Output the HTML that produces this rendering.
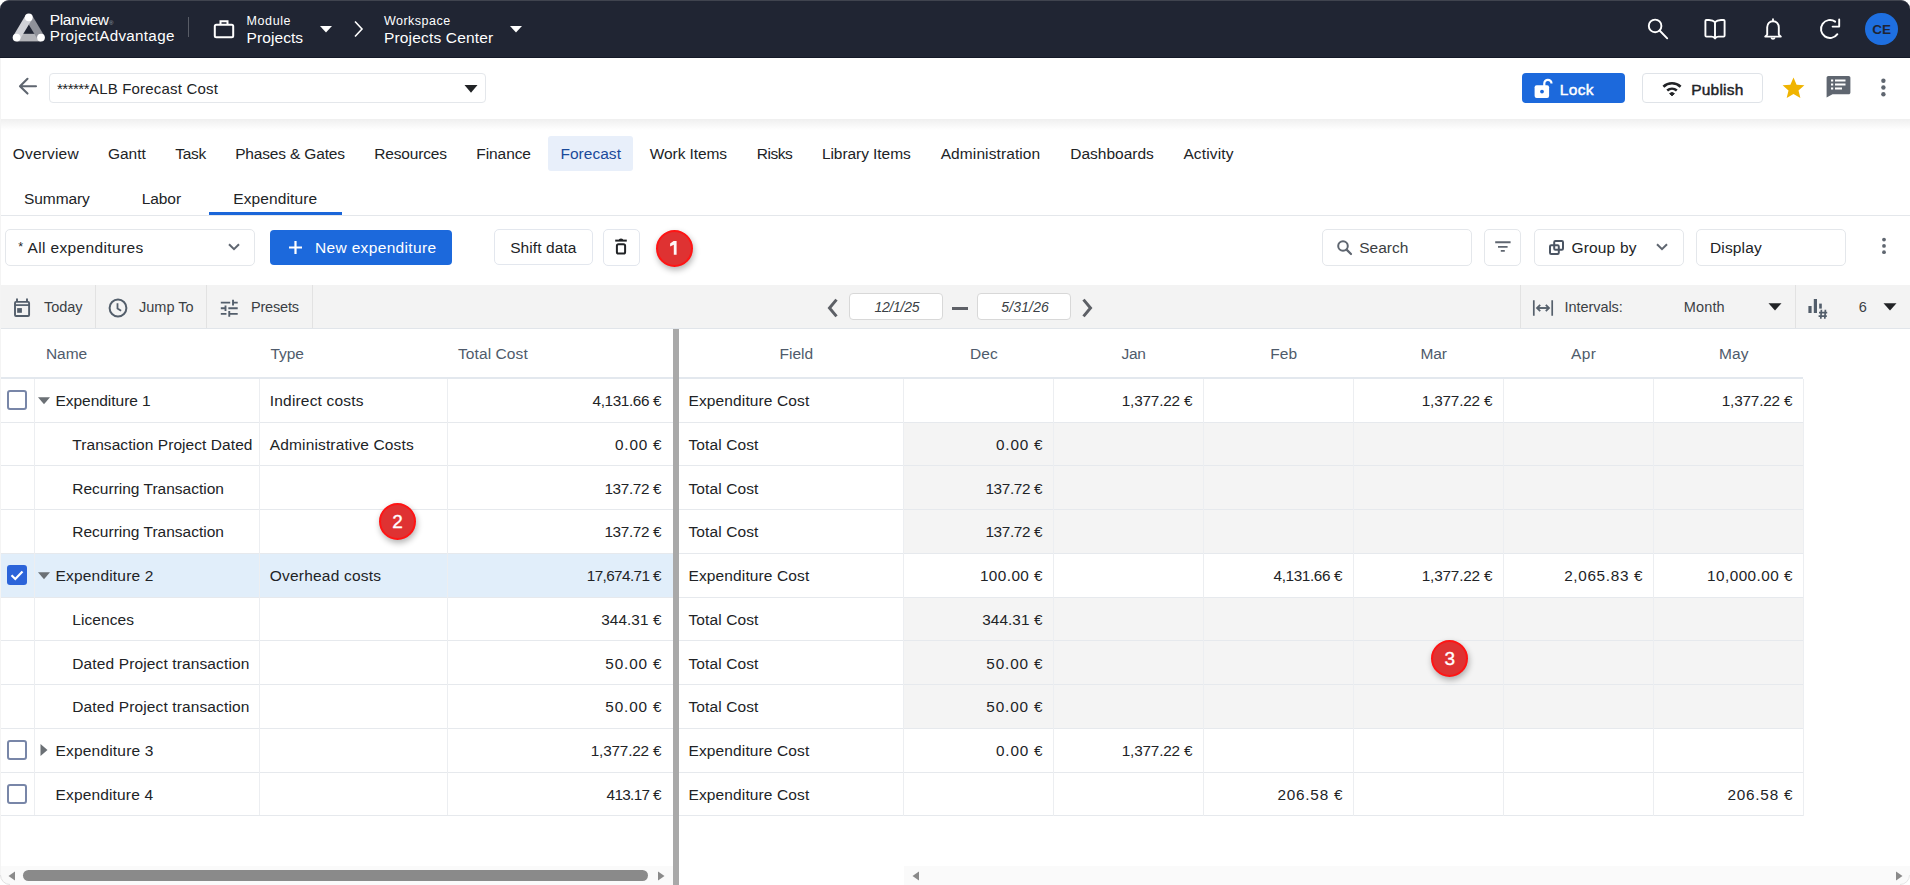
<!DOCTYPE html>
<html><head><meta charset="utf-8"><title>Forecast Expenditure</title>
<style>
*{box-sizing:border-box;margin:0;padding:0}
html,body{width:1910px;height:885px;overflow:hidden;background:#fff;font-family:"Liberation Sans",sans-serif;color:#212326}
svg{display:block}
</style></head><body>
<div style="position:absolute;left:0px;top:0px;width:1910px;height:58px;background:#202533;border-radius:9px 9px 0 0;border-top:1px solid #40444f;border-bottom:1px solid #141927;"></div>
<div style="position:absolute;left:0px;top:58px;width:1px;height:827px;background:#f4f4f4;"></div>
<svg style="position:absolute;left:8px;top:8px;overflow:visible;" width="44" height="40" viewBox="0 0 44 40">
<line x1="8.6" y1="29.6" x2="33" y2="29.6" stroke="#b3b4b9" stroke-width="7.6"/>
<line x1="20.8" y1="9.3" x2="33" y2="29.6" stroke="#8f9199" stroke-width="7.6"/>
<line x1="8.6" y1="29.6" x2="20.8" y2="9.3" stroke="#d1d2d7" stroke-width="7.6"/>
<circle cx="20.8" cy="9.3" r="3.9" fill="#fff"/>
<circle cx="8.6" cy="29.6" r="3.9" fill="#fff"/>
<circle cx="33" cy="29.6" r="3.9" fill="#fff"/>
</svg>
<span style="position:absolute;top:11.98px;font-size:15.5px;line-height:15.5px;white-space:pre;color:#fff;letter-spacing:-0.379px;left:49.7px;">Planview</span>
<span style="position:absolute;left:109px;top:20px;font-size:6px;line-height:6px;color:#9aa0aa">&#174;</span>
<span style="position:absolute;top:27.93px;font-size:15.2px;line-height:15.2px;white-space:pre;color:#fff;letter-spacing:0.318px;left:49.7px;">ProjectAdvantage</span>
<div style="position:absolute;left:188px;top:17px;width:1px;height:20px;background:#585c66;"></div>
<svg style="position:absolute;left:213px;top:19px;overflow:visible;" width="22" height="20" viewBox="0 0 22 20">
<rect x="1.8" y="5.8" width="18.4" height="12.4" rx="1.5" fill="none" stroke="#fff" stroke-width="2"/>
<path d="M7.5 5.8V2.2h7v3.6" fill="none" stroke="#fff" stroke-width="2"/>
</svg>
<span style="position:absolute;top:15.42px;font-size:12.5px;line-height:12.5px;white-space:pre;color:#fff;letter-spacing:0.583px;left:246.6px;">Module</span>
<span style="position:absolute;top:29.58px;font-size:15.5px;line-height:15.5px;white-space:pre;color:#fff;letter-spacing:0.075px;left:246.6px;">Projects</span>
<svg style="position:absolute;left:319px;top:25px;overflow:visible;" width="14" height="8" viewBox="0 0 14 8"><path d="M1 1h12l-6 6.5z" fill="#fff"/></svg>
<svg style="position:absolute;left:352px;top:20px;overflow:visible;" width="12" height="18" viewBox="0 0 12 18"><path d="M3 1.5l7 7.5-7 7.5" fill="none" stroke="#fff" stroke-width="1.6"/></svg>
<span style="position:absolute;top:15.42px;font-size:12.5px;line-height:12.5px;white-space:pre;color:#fff;letter-spacing:0.489px;left:383.9px;">Workspace</span>
<span style="position:absolute;top:29.58px;font-size:15.5px;line-height:15.5px;white-space:pre;color:#fff;letter-spacing:0.165px;left:384px;">Projects Center</span>
<svg style="position:absolute;left:509px;top:25px;overflow:visible;" width="14" height="8" viewBox="0 0 14 8"><path d="M1 1h12l-6 6.5z" fill="#fff"/></svg>
<svg style="position:absolute;left:1645px;top:17px;overflow:visible;" width="26" height="24" viewBox="0 0 26 24">
<circle cx="10.1" cy="8.9" r="6.3" fill="none" stroke="#fff" stroke-width="1.9"/>
<path d="M14.6 13.5l7.6 7.8" stroke="#fff" stroke-width="1.9" stroke-linecap="round"/>
</svg>
<svg style="position:absolute;left:1703px;top:17px;overflow:visible;" width="24" height="24" viewBox="0 0 24 24">
<path d="M12 5.2C10.5 3.6 8.5 3 6 3H3.4a1 1 0 0 0-1 1V18.6a1 1 0 0 0 1 1H8.5c1.4 0 2.6.7 3.5 1.8c.9-1.1 2.1-1.8 3.5-1.8H20.6a1 1 0 0 0 1-1V4a1 1 0 0 0-1-1H18C15.5 3 13.5 3.6 12 5.2z" fill="none" stroke="#fff" stroke-width="1.9" stroke-linejoin="round"/>
<path d="M12 5.2V21" stroke="#fff" stroke-width="1.9"/>
</svg>
<svg style="position:absolute;left:1762px;top:17px;overflow:visible;" width="22" height="24" viewBox="0 0 22 24">
<path d="M11 2.2v2" stroke="#fff" stroke-width="1.8" stroke-linecap="round"/>
<path d="M5.2 17.6v-7.4c0-3.4 2.5-6 5.8-6s5.8 2.6 5.8 6v7.4l2 2H3.2z" fill="none" stroke="#fff" stroke-width="1.9" stroke-linejoin="round"/>
<path d="M9.2 20.4c.3.9 1 1.4 1.8 1.4s1.5-.5 1.8-1.4" fill="none" stroke="#fff" stroke-width="1.7"/>
</svg>
<svg style="position:absolute;left:1818px;top:17px;overflow:visible;" width="24" height="24" viewBox="0 0 24 24">
<path d="M19.37 17.16A9 9 0 1 1 17.16 4.63" fill="none" stroke="#fff" stroke-width="1.9" stroke-linecap="round"/>
<path d="M21.2 2.4v7.2h-6.6" fill="none" stroke="#fff" stroke-width="1.9" stroke-linecap="round" stroke-linejoin="round"/>
</svg>
<div style="position:absolute;left:1865.3px;top:12.7px;width:32.6px;height:32.6px;background:#1e6fe0;border-radius:50%;"></div>
<span style="position:absolute;top:22.57px;font-size:13.5px;line-height:13.5px;white-space:pre;color:#1f2433;font-weight:700;left:1881.6px;transform:translateX(-50%);">CE</span>
<svg style="position:absolute;left:16px;top:75px;overflow:visible;" width="24" height="22" viewBox="0 0 24 22">
<path d="M20 11.2H4.5M11.5 3.8L4 11.2l7.5 7.4" fill="none" stroke="#5f6670" stroke-width="2.1" stroke-linecap="round" stroke-linejoin="round"/>
</svg>
<div style="position:absolute;left:49px;top:73px;width:437px;height:30px;border:1px solid #e4e7eb;border-radius:4px;background:#fff;"></div>
<span style="position:absolute;top:81.30px;font-size:15px;line-height:15px;white-space:pre;color:#212326;letter-spacing:-0.505px;left:57px;">******</span>
<span style="position:absolute;top:81.30px;font-size:15px;line-height:15px;white-space:pre;color:#212326;letter-spacing:0.183px;left:89px;">ALB Forecast Cost</span>
<svg style="position:absolute;left:463px;top:84px;overflow:visible;" width="16" height="10" viewBox="0 0 16 10"><path d="M1.5 1h13l-6.5 7.7z" fill="#212326"/></svg>
<div style="position:absolute;left:1522px;top:73px;width:103px;height:30px;background:#1c69dc;border-radius:4px;"></div>
<svg style="position:absolute;left:1532px;top:77px;overflow:visible;" width="22" height="22" viewBox="0 0 22 22">
<path d="M12.3 9V6.4a3.6 3.6 0 0 1 7.2 0" fill="none" stroke="#fff" stroke-width="2.2"/>
<rect x="2.6" y="8.3" width="14.5" height="12.6" rx="2" fill="#fff"/>
<circle cx="10" cy="14.6" r="1.9" fill="#1c69dc"/>
</svg>
<span style="position:absolute;top:82.48px;font-size:15.5px;line-height:15.5px;white-space:pre;color:#fff;letter-spacing:0.312px;left:1559.8px;-webkit-text-stroke:0.45px #fff;">Lock</span>
<div style="position:absolute;left:1642px;top:73px;width:121px;height:30px;border:1px solid #dfe3e8;border-radius:4px;background:#fff;"></div>
<svg style="position:absolute;left:1661px;top:80px;overflow:visible;" width="22" height="18" viewBox="0 0 22 18">
<path d="M2.4 6.7A12.6 12.6 0 0 1 19.6 6.7" fill="none" stroke="#212326" stroke-width="2.6"/>
<path d="M6.2 10.5A7.4 7.4 0 0 1 15.8 10.5" fill="none" stroke="#212326" stroke-width="2.6"/>
<path d="M8.6 13.6A3.6 3.6 0 0 1 13.4 13.6L11 15.8z" fill="#212326" stroke="#212326" stroke-width="1" stroke-linejoin="round"/>
</svg>
<span style="position:absolute;top:82.48px;font-size:15.5px;line-height:15.5px;white-space:pre;color:#222326;letter-spacing:0.208px;left:1691.2px;-webkit-text-stroke:0.45px #222326;">Publish</span>
<svg style="position:absolute;left:1781px;top:76px;overflow:visible;" width="25" height="24" viewBox="0 0 25 24"><path d="M12.5 1.5l3.1 7.2 7.8.6-5.9 5.1 1.9 7.6-6.9-4.1-6.8 4.1 1.8-7.6-5.9-5.1 7.8-.6z" fill="#f0b400"/></svg>
<svg style="position:absolute;left:1826px;top:75.2px;overflow:visible;" width="25" height="24" viewBox="0 0 25 24">
<path d="M3.2 1h19.4c1 0 1.8.8 1.8 1.8v14.6c0 1-.8 1.8-1.8 1.8H6.5L.6 22.4V2.8C.6 1.8 1.4 1 2.4 1z" fill="#5f6670"/>
<path d="M5 5.5h2.2M9 5.5h10.5M5 9.5h2.2M9 9.5h10.5M5 13.5h2.2M9 13.5h7" stroke="#fff" stroke-width="2"/>
</svg>
<svg style="position:absolute;left:1879px;top:77px;overflow:visible;" width="10" height="22" viewBox="0 0 10 22">
<circle cx="4.4" cy="3.8" r="2.2" fill="#5f6670"/><circle cx="4.4" cy="10.5" r="2.2" fill="#5f6670"/><circle cx="4.4" cy="17.2" r="2.2" fill="#5f6670"/>
</svg>
<div style="position:absolute;left:1px;top:119px;width:1909px;height:11px;background:linear-gradient(#efefef,rgba(255,255,255,0));"></div>
<div style="position:absolute;left:548px;top:136px;width:85px;height:35px;background:#e8effa;border-radius:3px;"></div>
<span style="position:absolute;top:145.68px;font-size:15.5px;line-height:15.5px;white-space:pre;color:#212326;letter-spacing:0.174px;left:12.8px;">Overview</span>
<span style="position:absolute;top:145.68px;font-size:15.5px;line-height:15.5px;white-space:pre;color:#212326;letter-spacing:-0.044px;left:108px;">Gantt</span>
<span style="position:absolute;top:145.68px;font-size:15.5px;line-height:15.5px;white-space:pre;color:#212326;letter-spacing:-0.294px;left:175.3px;">Task</span>
<span style="position:absolute;top:145.68px;font-size:15.5px;line-height:15.5px;white-space:pre;color:#212326;letter-spacing:-0.165px;left:235.2px;">Phases &amp; Gates</span>
<span style="position:absolute;top:145.68px;font-size:15.5px;line-height:15.5px;white-space:pre;color:#212326;letter-spacing:-0.177px;left:374.3px;">Resources</span>
<span style="position:absolute;top:145.68px;font-size:15.5px;line-height:15.5px;white-space:pre;color:#212326;letter-spacing:-0.079px;left:476.3px;">Finance</span>
<span style="position:absolute;top:145.68px;font-size:15.5px;line-height:15.5px;white-space:pre;color:#1a4a9a;letter-spacing:0.036px;left:560.4px;">Forecast</span>
<span style="position:absolute;top:145.68px;font-size:15.5px;line-height:15.5px;white-space:pre;color:#212326;letter-spacing:-0.089px;left:649.8px;">Work Items</span>
<span style="position:absolute;top:145.68px;font-size:15.5px;line-height:15.5px;white-space:pre;color:#212326;letter-spacing:-0.438px;left:756.7px;">Risks</span>
<span style="position:absolute;top:145.68px;font-size:15.5px;line-height:15.5px;white-space:pre;color:#212326;letter-spacing:-0.061px;left:821.9px;">Library Items</span>
<span style="position:absolute;top:145.68px;font-size:15.5px;line-height:15.5px;white-space:pre;color:#212326;letter-spacing:0.099px;left:940.7px;">Administration</span>
<span style="position:absolute;top:145.68px;font-size:15.5px;line-height:15.5px;white-space:pre;color:#212326;left:1070.3px;">Dashboards</span>
<span style="position:absolute;top:145.68px;font-size:15.5px;line-height:15.5px;white-space:pre;color:#212326;letter-spacing:0.138px;left:1183.4px;">Activity</span>
<span style="position:absolute;top:190.78px;font-size:15.5px;line-height:15.5px;white-space:pre;color:#212326;letter-spacing:-0.104px;left:24.1px;">Summary</span>
<span style="position:absolute;top:190.78px;font-size:15.5px;line-height:15.5px;white-space:pre;color:#212326;letter-spacing:-0.071px;left:141.7px;">Labor</span>
<span style="position:absolute;top:190.78px;font-size:15.5px;line-height:15.5px;white-space:pre;color:#212326;letter-spacing:0.106px;left:233.3px;">Expenditure</span>
<div style="position:absolute;left:1px;top:215px;width:1909px;height:1px;background:#e4e7eb;"></div>
<div style="position:absolute;left:209px;top:212px;width:133px;height:3px;background:#1a66d9;"></div>
<div style="position:absolute;left:5px;top:229px;width:250px;height:37px;border:1px solid #e4e7eb;border-radius:5px;background:#fff;"></div>
<span style="position:absolute;top:240.92px;font-size:12.5px;line-height:12.5px;white-space:pre;color:#212326;left:18.3px;">*</span>
<span style="position:absolute;top:240.08px;font-size:15.5px;line-height:15.5px;white-space:pre;color:#212326;letter-spacing:0.356px;left:27.5px;">All expenditures</span>
<svg style="position:absolute;left:227px;top:242px;overflow:visible;" width="14" height="10" viewBox="0 0 14 10"><path d="M2 2.2l5 5 5-5" fill="none" stroke="#5f6670" stroke-width="2"/></svg>
<div style="position:absolute;left:270px;top:230px;width:182px;height:35px;background:#1c69dc;border-radius:4px;"></div>
<svg style="position:absolute;left:287px;top:239px;overflow:visible;" width="17" height="17" viewBox="0 0 17 17"><path d="M8.5 2v13M2 8.5h13" stroke="#fff" stroke-width="2.2"/></svg>
<span style="position:absolute;top:240.08px;font-size:15.5px;line-height:15.5px;white-space:pre;color:#fff;letter-spacing:0.338px;left:315px;">New expenditure</span>
<div style="position:absolute;left:494px;top:229px;width:99px;height:36px;border:1px solid #e3e7ee;border-radius:5px;background:#fff;"></div>
<span style="position:absolute;top:240.08px;font-size:15.5px;line-height:15.5px;white-space:pre;color:#212326;letter-spacing:0.080px;left:510.2px;">Shift data</span>
<div style="position:absolute;left:603px;top:229px;width:37px;height:37px;border:1px solid #e3e7ee;border-radius:5px;background:#fff;"></div>
<svg style="position:absolute;left:613px;top:238px;overflow:visible;" width="16" height="18" viewBox="0 0 16 18">
<path d="M2.2 2.6H13.8" stroke="#212326" stroke-width="2"/>
<path d="M6.2 1.8Q8 0.6 9.8 1.8" fill="none" stroke="#212326" stroke-width="1.4"/>
<rect x="3.9" y="6.2" width="8.2" height="9.4" rx="1.6" fill="none" stroke="#212326" stroke-width="2"/>
</svg>
<div style="position:absolute;left:1322px;top:229px;width:150px;height:37px;border:1px solid #e4e7eb;border-radius:5px;background:#fff;"></div>
<svg style="position:absolute;left:1336px;top:239px;overflow:visible;" width="18" height="18" viewBox="0 0 18 18">
<circle cx="7" cy="7" r="4.8" fill="none" stroke="#5f6670" stroke-width="2"/>
<path d="M10.6 10.6l4.4 4.4" stroke="#5f6670" stroke-width="2.2" stroke-linecap="round"/>
</svg>
<span style="position:absolute;top:240.08px;font-size:15.5px;line-height:15.5px;white-space:pre;color:#3c4043;letter-spacing:-0.021px;left:1359.3px;">Search</span>
<div style="position:absolute;left:1484px;top:229px;width:37px;height:37px;border:1px solid #e4e7eb;border-radius:5px;background:#fff;"></div>
<svg style="position:absolute;left:1493px;top:240px;overflow:visible;" width="20" height="14" viewBox="0 0 20 14"><path d="M2.2 2.2H17.6M5 6.9H14.6M7.8 10.9H11.8" stroke="#5f6670" stroke-width="1.9"/></svg>
<div style="position:absolute;left:1534px;top:229px;width:150px;height:37px;border:1px solid #e4e7eb;border-radius:5px;background:#fff;"></div>
<svg style="position:absolute;left:1548px;top:239px;overflow:visible;" width="18" height="18" viewBox="0 0 18 18">
<rect x="2" y="6.2" width="8.8" height="8.8" rx="1.2" fill="none" stroke="#4b5563" stroke-width="2"/>
<rect x="6.2" y="2" width="8.8" height="8.8" rx="1.2" fill="none" stroke="#4b5563" stroke-width="2"/>
</svg>
<span style="position:absolute;top:240.08px;font-size:15.5px;line-height:15.5px;white-space:pre;color:#212326;letter-spacing:0.192px;left:1571.4px;">Group by</span>
<svg style="position:absolute;left:1655px;top:242px;overflow:visible;" width="14" height="10" viewBox="0 0 14 10"><path d="M2 2.2l5 5 5-5" fill="none" stroke="#5f6670" stroke-width="2"/></svg>
<div style="position:absolute;left:1696px;top:229px;width:150px;height:37px;border:1px solid #e4e7eb;border-radius:5px;background:#fff;"></div>
<span style="position:absolute;top:240.08px;font-size:15.5px;line-height:15.5px;white-space:pre;color:#212326;letter-spacing:0.139px;left:1710px;">Display</span>
<svg style="position:absolute;left:1880px;top:237px;overflow:visible;" width="8" height="18" viewBox="0 0 8 18"><circle cx="4" cy="2.6" r="1.9" fill="#5f6670"/><circle cx="4" cy="8.9" r="1.9" fill="#5f6670"/><circle cx="4" cy="15.2" r="1.9" fill="#5f6670"/></svg>
<div style="position:absolute;left:1px;top:285px;width:1909px;height:44px;background:#f3f3f3;border-bottom:1px solid #e1e5ea;"></div>
<div style="position:absolute;left:95px;top:285px;width:1px;height:43px;background:#e2e2e2;"></div>
<div style="position:absolute;left:206px;top:285px;width:1px;height:43px;background:#e2e2e2;"></div>
<div style="position:absolute;left:312px;top:285px;width:1px;height:43px;background:#e2e2e2;"></div>
<div style="position:absolute;left:1520px;top:285px;width:1px;height:43px;background:#e2e2e2;"></div>
<div style="position:absolute;left:1795px;top:285px;width:1px;height:43px;background:#e2e2e2;"></div>
<svg style="position:absolute;left:12px;top:297px;overflow:visible;" width="20" height="22" viewBox="0 0 20 22">
<rect x="3" y="4.9" width="14.1" height="14.1" rx="1" fill="none" stroke="#535e6b" stroke-width="1.9"/>
<path d="M3 8.1h14.1" stroke="#535e6b" stroke-width="1.7"/>
<path d="M5 1.4v3.5M15 1.4v3.5" stroke="#535e6b" stroke-width="1.9"/>
<rect x="5.15" y="11.1" width="4.75" height="4.7" fill="#535e6b"/>
</svg>
<span style="position:absolute;top:299.72px;font-size:14.5px;line-height:14.5px;white-space:pre;color:#3b3f45;letter-spacing:-0.021px;left:44px;">Today</span>
<svg style="position:absolute;left:107px;top:297px;overflow:visible;" width="22" height="22" viewBox="0 0 22 22">
<circle cx="11" cy="11" r="8.4" fill="none" stroke="#535e6b" stroke-width="2"/>
<path d="M10.5 6.2v5.2l3.6 2.4" fill="none" stroke="#535e6b" stroke-width="1.8"/>
</svg>
<span style="position:absolute;top:299.72px;font-size:14.5px;line-height:14.5px;white-space:pre;color:#3b3f45;left:139px;">Jump To</span>
<svg style="position:absolute;left:217.5px;top:296.8px" width="23" height="23" viewBox="0 0 24.5 24.5"><path d="M3 17v2h6v-2H3zM3 5v2h10V5H3zm10 16v-2h8v-2h-8v-2h-2v6h2zM7 9v2H3v2h4v2h2V9H7zm14 4v-2H11v2h10zm-6-4h2V7h4V5h-4V3h-2v6z" fill="#535e6b"/></svg>
<span style="position:absolute;top:299.72px;font-size:14.5px;line-height:14.5px;white-space:pre;color:#3b3f45;letter-spacing:-0.167px;left:250.9px;">Presets</span>
<svg style="position:absolute;left:825px;top:297px;overflow:visible;" width="16" height="22" viewBox="0 0 16 22"><path d="M11.5 2.6l-7 8.4 7 8.4" fill="none" stroke="#5d6066" stroke-width="3"/></svg>
<div style="position:absolute;left:849px;top:293px;width:94px;height:27px;border:1px solid #d8d8d8;border-radius:4px;background:#fff;"></div>
<span style="position:absolute;top:299.85px;font-size:14px;line-height:14px;white-space:pre;color:#3b3f45;font-style:italic;letter-spacing:-0.274px;left:874.4px;">12/1/25</span>
<div style="position:absolute;left:952px;top:307px;width:16px;height:2.5px;background:#5d6066;"></div>
<div style="position:absolute;left:977px;top:293px;width:94px;height:27px;border:1px solid #d8d8d8;border-radius:4px;background:#fff;"></div>
<span style="position:absolute;top:299.85px;font-size:14px;line-height:14px;white-space:pre;color:#3b3f45;font-style:italic;letter-spacing:0.140px;left:1001.3px;">5/31/26</span>
<svg style="position:absolute;left:1079px;top:297px;overflow:visible;" width="16" height="22" viewBox="0 0 16 22"><path d="M4.5 2.6l7 8.4-7 8.4" fill="none" stroke="#5d6066" stroke-width="3"/></svg>
<svg style="position:absolute;left:1531px;top:298px;overflow:visible;" width="24" height="20" viewBox="0 0 24 20">
<path d="M2.8 2.2v15.6M21.2 2.2v15.6" stroke="#56606c" stroke-width="1.7"/>
<path d="M6.5 10h11" stroke="#56606c" stroke-width="1.9"/>
<path d="M9.2 6.8L6 10l3.2 3.2M14.8 6.8L18 10l-3.2 3.2" fill="none" stroke="#56606c" stroke-width="1.8"/>
</svg>
<span style="position:absolute;top:299.92px;font-size:14.5px;line-height:14.5px;white-space:pre;color:#3b3f45;letter-spacing:-0.064px;left:1564.5px;">Intervals:</span>
<span style="position:absolute;top:299.92px;font-size:14.5px;line-height:14.5px;white-space:pre;color:#3b3f45;letter-spacing:0.138px;left:1683.8px;">Month</span>
<svg style="position:absolute;left:1767px;top:302px;overflow:visible;" width="16" height="10" viewBox="0 0 16 10"><path d="M1.5 1.2h13l-6.5 7.2z" fill="#212326"/></svg>
<svg style="position:absolute;left:1806px;top:296px;overflow:visible;" width="24" height="24" viewBox="0 0 24 24">
<rect x="2.4" y="10" width="3.2" height="7" fill="#535e6b"/>
<rect x="7.8" y="3" width="3.2" height="14" fill="#535e6b"/>
<rect x="13.2" y="7.6" width="2.6" height="5" fill="#535e6b"/>
<path d="M15.4 13.8l-.6 9M19.4 13.8l-.6 9M13 16.6h8.2M12.6 20.2h8.2" stroke="#535e6b" stroke-width="1.7"/>
</svg>
<span style="position:absolute;top:299.92px;font-size:14.5px;line-height:14.5px;white-space:pre;color:#3b3f45;left:1858.7px;">6</span>
<svg style="position:absolute;left:1882px;top:302px;overflow:visible;" width="16" height="10" viewBox="0 0 16 10"><path d="M1.5 1.2h13l-6.5 7.2z" fill="#212326"/></svg>
<span style="position:absolute;top:346.08px;font-size:15.5px;line-height:15.5px;white-space:pre;color:#4f5b6b;letter-spacing:-0.015px;left:45.9px;">Name</span>
<span style="position:absolute;top:346.08px;font-size:15.5px;line-height:15.5px;white-space:pre;color:#4f5b6b;letter-spacing:-0.102px;left:270.6px;">Type</span>
<span style="position:absolute;top:346.08px;font-size:15.5px;line-height:15.5px;white-space:pre;color:#4f5b6b;letter-spacing:0.088px;left:458px;">Total Cost</span>
<span style="position:absolute;top:346.08px;font-size:15.5px;line-height:15.5px;white-space:pre;color:#4f5b6b;letter-spacing:0.018px;left:779.5px;">Field</span>
<span style="position:absolute;top:346.08px;font-size:15.5px;line-height:15.5px;white-space:pre;color:#4f5b6b;letter-spacing:0.174px;left:969.9px;">Dec</span>
<span style="position:absolute;top:346.08px;font-size:15.5px;line-height:15.5px;white-space:pre;color:#4f5b6b;letter-spacing:-0.300px;left:1121.6px;">Jan</span>
<span style="position:absolute;top:346.08px;font-size:15.5px;line-height:15.5px;white-space:pre;color:#4f5b6b;left:1270.3px;">Feb</span>
<span style="position:absolute;top:346.08px;font-size:15.5px;line-height:15.5px;white-space:pre;color:#4f5b6b;letter-spacing:-0.101px;left:1420.4px;">Mar</span>
<span style="position:absolute;top:346.08px;font-size:15.5px;line-height:15.5px;white-space:pre;color:#4f5b6b;letter-spacing:0.392px;left:1571px;">Apr</span>
<span style="position:absolute;top:346.08px;font-size:15.5px;line-height:15.5px;white-space:pre;color:#4f5b6b;letter-spacing:0.134px;left:1719px;">May</span>
<div style="position:absolute;left:1px;top:377px;width:672px;height:2px;background:#e3e8ee;"></div>
<div style="position:absolute;left:679px;top:377px;width:1124px;height:2px;background:#e3e8ee;"></div>
<div style="position:absolute;left:1px;top:554px;width:672px;height:43px;background:#e1eefa;"></div>
<div style="position:absolute;left:903px;top:423px;width:900px;height:130px;background:#f4f4f4;"></div>
<div style="position:absolute;left:903px;top:598px;width:900px;height:130px;background:#f4f4f4;"></div>
<div style="position:absolute;left:1px;top:422px;width:672px;height:1px;background:#e6e9ed;"></div>
<div style="position:absolute;left:679px;top:422px;width:1124px;height:1px;background:#e6e9ed;"></div>
<div style="position:absolute;left:1px;top:465px;width:672px;height:1px;background:#e6e9ed;"></div>
<div style="position:absolute;left:679px;top:465px;width:1124px;height:1px;background:#e6e9ed;"></div>
<div style="position:absolute;left:1px;top:509px;width:672px;height:1px;background:#e6e9ed;"></div>
<div style="position:absolute;left:679px;top:509px;width:1124px;height:1px;background:#e6e9ed;"></div>
<div style="position:absolute;left:1px;top:553px;width:672px;height:1px;background:#e6e9ed;"></div>
<div style="position:absolute;left:679px;top:553px;width:1124px;height:1px;background:#e6e9ed;"></div>
<div style="position:absolute;left:1px;top:597px;width:672px;height:1px;background:#e6e9ed;"></div>
<div style="position:absolute;left:679px;top:597px;width:1124px;height:1px;background:#e6e9ed;"></div>
<div style="position:absolute;left:1px;top:640px;width:672px;height:1px;background:#e6e9ed;"></div>
<div style="position:absolute;left:679px;top:640px;width:1124px;height:1px;background:#e6e9ed;"></div>
<div style="position:absolute;left:1px;top:684px;width:672px;height:1px;background:#e6e9ed;"></div>
<div style="position:absolute;left:679px;top:684px;width:1124px;height:1px;background:#e6e9ed;"></div>
<div style="position:absolute;left:1px;top:728px;width:672px;height:1px;background:#e6e9ed;"></div>
<div style="position:absolute;left:679px;top:728px;width:1124px;height:1px;background:#e6e9ed;"></div>
<div style="position:absolute;left:1px;top:772px;width:672px;height:1px;background:#e6e9ed;"></div>
<div style="position:absolute;left:679px;top:772px;width:1124px;height:1px;background:#e6e9ed;"></div>
<div style="position:absolute;left:1px;top:815px;width:672px;height:1px;background:#e6e9ed;"></div>
<div style="position:absolute;left:679px;top:815px;width:1124px;height:1px;background:#e6e9ed;"></div>
<div style="position:absolute;left:34px;top:379px;width:1px;height:436px;background:#eceef1;"></div>
<div style="position:absolute;left:259px;top:379px;width:1px;height:436px;background:#eceef1;"></div>
<div style="position:absolute;left:447px;top:379px;width:1px;height:436px;background:#eceef1;"></div>
<div style="position:absolute;left:903px;top:379px;width:1px;height:437px;background:#eceef1;"></div>
<div style="position:absolute;left:1053px;top:379px;width:1px;height:437px;background:#eceef1;"></div>
<div style="position:absolute;left:1203px;top:379px;width:1px;height:437px;background:#eceef1;"></div>
<div style="position:absolute;left:1353px;top:379px;width:1px;height:437px;background:#eceef1;"></div>
<div style="position:absolute;left:1503px;top:379px;width:1px;height:437px;background:#eceef1;"></div>
<div style="position:absolute;left:1653px;top:379px;width:1px;height:437px;background:#eceef1;"></div>
<div style="position:absolute;left:1803px;top:379px;width:1px;height:437px;background:#eceef1;"></div>
<div style="position:absolute;left:673px;top:329px;width:6px;height:556px;background:#a9a9a9;"></div>
<div style="position:absolute;left:7px;top:390.0px;width:20px;height:20px;border:2px solid #7886a8;border-radius:3px;background:#fff"></div>
<svg style="position:absolute;left:37px;top:395.8px;overflow:visible;" width="14" height="10" viewBox="0 0 14 10"><path d="M1 1.2h12l-6 7z" fill="#6b7075"/></svg>
<span style="position:absolute;top:392.88px;font-size:15.5px;line-height:15.5px;white-space:pre;color:#212326;letter-spacing:-0.035px;left:55.5px;">Expenditure 1</span>
<span style="position:absolute;top:392.88px;font-size:15.5px;line-height:15.5px;white-space:pre;color:#212326;letter-spacing:0.178px;left:269.8px;">Indirect costs</span>
<span style="position:absolute;top:393.05px;font-size:15.3px;line-height:15.3px;white-space:pre;color:#212326;letter-spacing:-0.371px;right:1248.87px;">4,131.66 €</span>
<span style="position:absolute;top:436.88px;font-size:15.5px;line-height:15.5px;white-space:pre;color:#212326;letter-spacing:0.063px;left:72.3px;">Transaction Project Dated</span>
<span style="position:absolute;top:436.88px;font-size:15.5px;line-height:15.5px;white-space:pre;color:#212326;letter-spacing:0.137px;left:269.8px;">Administrative Costs</span>
<span style="position:absolute;top:437.05px;font-size:15.3px;line-height:15.3px;white-space:pre;color:#212326;letter-spacing:0.778px;right:1247.72px;">0.00 €</span>
<span style="position:absolute;top:480.88px;font-size:15.5px;line-height:15.5px;white-space:pre;color:#212326;left:72.3px;">Recurring Transaction</span>
<span style="position:absolute;top:481.05px;font-size:15.3px;line-height:15.3px;white-space:pre;color:#212326;letter-spacing:-0.356px;right:1248.86px;">137.72 €</span>
<span style="position:absolute;top:523.88px;font-size:15.5px;line-height:15.5px;white-space:pre;color:#212326;left:72.3px;">Recurring Transaction</span>
<span style="position:absolute;top:524.05px;font-size:15.3px;line-height:15.3px;white-space:pre;color:#212326;letter-spacing:-0.356px;right:1248.86px;">137.72 €</span>
<div style="position:absolute;left:7px;top:565.0px;width:20px;height:20px;background:#2c64d9;border-radius:3px"></div>
<svg style="position:absolute;left:7px;top:565.0px;overflow:visible;" width="20" height="20" viewBox="0 0 20 20"><path d="M4.5 10.2l3.8 3.8 7.2-7.6" fill="none" stroke="#fff" stroke-width="2.2"/></svg>
<svg style="position:absolute;left:37px;top:570.8px;overflow:visible;" width="14" height="10" viewBox="0 0 14 10"><path d="M1 1.2h12l-6 7z" fill="#6b7075"/></svg>
<span style="position:absolute;top:567.88px;font-size:15.5px;line-height:15.5px;white-space:pre;color:#212326;letter-spacing:0.188px;left:55.5px;">Expenditure 2</span>
<span style="position:absolute;top:567.88px;font-size:15.5px;line-height:15.5px;white-space:pre;color:#212326;letter-spacing:0.203px;left:269.8px;">Overhead costs</span>
<span style="position:absolute;top:568.05px;font-size:15.3px;line-height:15.3px;white-space:pre;color:#212326;letter-spacing:-0.610px;right:1249.11px;">17,674.71 €</span>
<span style="position:absolute;top:611.88px;font-size:15.5px;line-height:15.5px;white-space:pre;color:#212326;letter-spacing:0.077px;left:72.3px;">Licences</span>
<span style="position:absolute;top:612.05px;font-size:15.3px;line-height:15.3px;white-space:pre;color:#212326;letter-spacing:0.119px;right:1248.38px;">344.31 €</span>
<span style="position:absolute;top:655.88px;font-size:15.5px;line-height:15.5px;white-space:pre;color:#212326;letter-spacing:0.126px;left:72.3px;">Dated Project transaction</span>
<span style="position:absolute;top:656.05px;font-size:15.3px;line-height:15.3px;white-space:pre;color:#212326;letter-spacing:0.850px;right:1247.65px;">50.00 €</span>
<span style="position:absolute;top:698.88px;font-size:15.5px;line-height:15.5px;white-space:pre;color:#212326;letter-spacing:0.126px;left:72.3px;">Dated Project transaction</span>
<span style="position:absolute;top:699.05px;font-size:15.3px;line-height:15.3px;white-space:pre;color:#212326;letter-spacing:0.850px;right:1247.65px;">50.00 €</span>
<div style="position:absolute;left:7px;top:740.0px;width:20px;height:20px;border:2px solid #7886a8;border-radius:3px;background:#fff"></div>
<svg style="position:absolute;left:39px;top:743.0px;overflow:visible;" width="10" height="14" viewBox="0 0 10 14"><path d="M1.5 1l7 6-7 6z" fill="#6b7075"/></svg>
<span style="position:absolute;top:742.88px;font-size:15.5px;line-height:15.5px;white-space:pre;color:#212326;letter-spacing:0.188px;left:55.5px;">Expenditure 3</span>
<span style="position:absolute;top:743.05px;font-size:15.3px;line-height:15.3px;white-space:pre;color:#212326;letter-spacing:-0.171px;right:1248.67px;">1,377.22 €</span>
<div style="position:absolute;left:7px;top:783.5px;width:20px;height:20px;border:2px solid #7886a8;border-radius:3px;background:#fff"></div>
<span style="position:absolute;top:786.88px;font-size:15.5px;line-height:15.5px;white-space:pre;color:#212326;letter-spacing:0.157px;left:55.5px;">Expenditure 4</span>
<span style="position:absolute;top:787.05px;font-size:15.3px;line-height:15.3px;white-space:pre;color:#212326;letter-spacing:-0.656px;right:1249.16px;">413.17 €</span>
<span style="position:absolute;top:392.88px;font-size:15.5px;line-height:15.5px;white-space:pre;color:#212326;letter-spacing:0.125px;left:688.5px;">Expenditure Cost</span>
<span style="position:absolute;top:393.05px;font-size:15.3px;line-height:15.3px;white-space:pre;color:#212326;letter-spacing:-0.171px;right:717.67px;">1,377.22 €</span>
<span style="position:absolute;top:393.05px;font-size:15.3px;line-height:15.3px;white-space:pre;color:#212326;letter-spacing:-0.171px;right:417.67px;">1,377.22 €</span>
<span style="position:absolute;top:393.05px;font-size:15.3px;line-height:15.3px;white-space:pre;color:#212326;letter-spacing:-0.171px;right:117.67px;">1,377.22 €</span>
<span style="position:absolute;top:436.88px;font-size:15.5px;line-height:15.5px;white-space:pre;color:#212326;letter-spacing:0.108px;left:688.5px;">Total Cost</span>
<span style="position:absolute;top:437.05px;font-size:15.3px;line-height:15.3px;white-space:pre;color:#212326;letter-spacing:0.778px;right:866.72px;">0.00 €</span>
<span style="position:absolute;top:480.88px;font-size:15.5px;line-height:15.5px;white-space:pre;color:#212326;letter-spacing:0.108px;left:688.5px;">Total Cost</span>
<span style="position:absolute;top:481.05px;font-size:15.3px;line-height:15.3px;white-space:pre;color:#212326;letter-spacing:-0.356px;right:867.86px;">137.72 €</span>
<span style="position:absolute;top:523.88px;font-size:15.5px;line-height:15.5px;white-space:pre;color:#212326;letter-spacing:0.108px;left:688.5px;">Total Cost</span>
<span style="position:absolute;top:524.05px;font-size:15.3px;line-height:15.3px;white-space:pre;color:#212326;letter-spacing:-0.356px;right:867.86px;">137.72 €</span>
<span style="position:absolute;top:567.88px;font-size:15.5px;line-height:15.5px;white-space:pre;color:#212326;letter-spacing:0.125px;left:688.5px;">Expenditure Cost</span>
<span style="position:absolute;top:568.05px;font-size:15.3px;line-height:15.3px;white-space:pre;color:#212326;letter-spacing:0.432px;right:867.07px;">100.00 €</span>
<span style="position:absolute;top:568.05px;font-size:15.3px;line-height:15.3px;white-space:pre;color:#212326;letter-spacing:-0.371px;right:567.87px;">4,131.66 €</span>
<span style="position:absolute;top:568.05px;font-size:15.3px;line-height:15.3px;white-space:pre;color:#212326;letter-spacing:-0.171px;right:417.67px;">1,377.22 €</span>
<span style="position:absolute;top:568.05px;font-size:15.3px;line-height:15.3px;white-space:pre;color:#212326;letter-spacing:0.669px;right:266.83px;">2,065.83 €</span>
<span style="position:absolute;top:568.05px;font-size:15.3px;line-height:15.3px;white-space:pre;color:#212326;letter-spacing:0.472px;right:117.03px;">10,000.00 €</span>
<span style="position:absolute;top:611.88px;font-size:15.5px;line-height:15.5px;white-space:pre;color:#212326;letter-spacing:0.108px;left:688.5px;">Total Cost</span>
<span style="position:absolute;top:612.05px;font-size:15.3px;line-height:15.3px;white-space:pre;color:#212326;letter-spacing:0.119px;right:867.38px;">344.31 €</span>
<span style="position:absolute;top:655.88px;font-size:15.5px;line-height:15.5px;white-space:pre;color:#212326;letter-spacing:0.108px;left:688.5px;">Total Cost</span>
<span style="position:absolute;top:656.05px;font-size:15.3px;line-height:15.3px;white-space:pre;color:#212326;letter-spacing:0.850px;right:866.65px;">50.00 €</span>
<span style="position:absolute;top:698.88px;font-size:15.5px;line-height:15.5px;white-space:pre;color:#212326;letter-spacing:0.108px;left:688.5px;">Total Cost</span>
<span style="position:absolute;top:699.05px;font-size:15.3px;line-height:15.3px;white-space:pre;color:#212326;letter-spacing:0.850px;right:866.65px;">50.00 €</span>
<span style="position:absolute;top:742.88px;font-size:15.5px;line-height:15.5px;white-space:pre;color:#212326;letter-spacing:0.125px;left:688.5px;">Expenditure Cost</span>
<span style="position:absolute;top:743.05px;font-size:15.3px;line-height:15.3px;white-space:pre;color:#212326;letter-spacing:0.778px;right:866.72px;">0.00 €</span>
<span style="position:absolute;top:743.05px;font-size:15.3px;line-height:15.3px;white-space:pre;color:#212326;letter-spacing:-0.171px;right:717.67px;">1,377.22 €</span>
<span style="position:absolute;top:786.88px;font-size:15.5px;line-height:15.5px;white-space:pre;color:#212326;letter-spacing:0.125px;left:688.5px;">Expenditure Cost</span>
<span style="position:absolute;top:787.05px;font-size:15.3px;line-height:15.3px;white-space:pre;color:#212326;letter-spacing:0.782px;right:566.72px;">206.58 €</span>
<span style="position:absolute;top:787.05px;font-size:15.3px;line-height:15.3px;white-space:pre;color:#212326;letter-spacing:0.782px;right:116.72px;">206.58 €</span>
<div style="position:absolute;left:1px;top:866px;width:672px;height:19px;background:#fafafa;"></div>
<div style="position:absolute;left:23px;top:870px;width:625px;height:11px;background:#8a8a8a;border-radius:6px;"></div>
<svg style="position:absolute;left:6px;top:870px;overflow:visible;" width="12" height="12" viewBox="0 0 12 12"><path d="M9 1.5v9l-6.5-4.5z" fill="#8a8a8a"/></svg>
<svg style="position:absolute;left:655px;top:870px;overflow:visible;" width="12" height="12" viewBox="0 0 12 12"><path d="M3 1.5v9l6.5-4.5z" fill="#8a8a8a"/></svg>
<div style="position:absolute;left:904px;top:866px;width:1006px;height:19px;background:#fafafa;"></div>
<svg style="position:absolute;left:910px;top:870px;overflow:visible;" width="12" height="12" viewBox="0 0 12 12"><path d="M9 1.5v9l-6.5-4.5z" fill="#8a8a8a"/></svg>
<svg style="position:absolute;left:1893px;top:870px;overflow:visible;" width="12" height="12" viewBox="0 0 12 12"><path d="M3 1.5v9l6.5-4.5z" fill="#8a8a8a"/></svg>
<div style="position:absolute;left:655.7px;top:229.9px;width:37.6px;height:37.4px;border-radius:50%;background:#df3232;border:2px solid #ff1414;box-shadow:1px 3px 6px rgba(0,0,0,.3);"></div>
<span style="position:absolute;top:239.11px;font-size:19px;line-height:19px;white-space:pre;color:#fff;left:674.5px;transform:translateX(-50%);-webkit-text-stroke:0.35px #fff;"></span>
<svg style="position:absolute;left:665px;top:236px;overflow:visible;" width="20" height="24" viewBox="0 0 20 24"><path d="M8.6 4.9H11.6V18.8H8.8V8.7L5.1 10.4V7.5z" fill="#fff" fill-opacity=".96"/></svg>
<div style="position:absolute;left:378.8px;top:502.9px;width:37.6px;height:37.4px;border-radius:50%;background:#df3232;border:2px solid #ff1414;box-shadow:1px 3px 6px rgba(0,0,0,.3);"></div>
<span style="position:absolute;top:512.11px;font-size:19px;line-height:19px;white-space:pre;color:#fff;left:397.6px;transform:translateX(-50%);-webkit-text-stroke:0.35px #fff;">2</span>
<div style="position:absolute;left:1430.9px;top:640.0px;width:37.6px;height:37.4px;border-radius:50%;background:#df3232;border:2px solid #ff1414;box-shadow:1px 3px 6px rgba(0,0,0,.3);"></div>
<span style="position:absolute;top:649.21px;font-size:19px;line-height:19px;white-space:pre;color:#fff;left:1449.7px;transform:translateX(-50%);-webkit-text-stroke:0.35px #fff;">3</span>
<svg style="position:absolute;left:0px;top:875px;overflow:visible;" width="10" height="10" viewBox="0 0 10 10"><path d="M0 0V10H10A10 10 0 0 1 0 0z" fill="#fff"/><path d="M0.5 0A9.5 9.5 0 0 0 10 9.5" fill="none" stroke="#e2e2e2" stroke-width="1"/></svg>
<svg style="position:absolute;left:1900px;top:875px;overflow:visible;" width="10" height="10" viewBox="0 0 10 10"><path d="M10 0V10H0A10 10 0 0 0 10 0z" fill="#fff"/><path d="M9.5 0A9.5 9.5 0 0 1 0 9.5" fill="none" stroke="#e6e6e6" stroke-width="1"/></svg>
</body></html>
